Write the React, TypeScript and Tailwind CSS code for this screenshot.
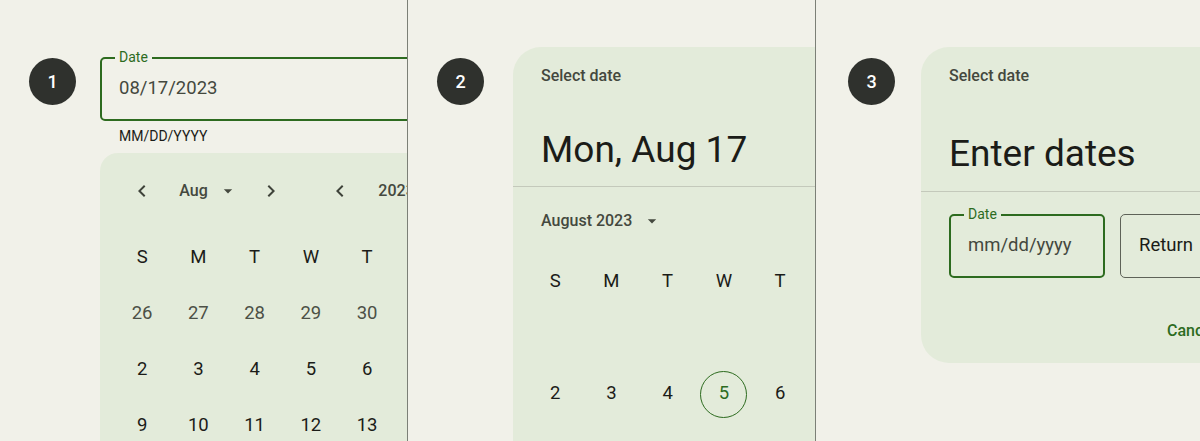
import React from 'react';

const green = 'text-[#2d6b1f]';

function Badge({ n }: { n: number }) {
  return (
    <div className="w-[47px] h-[47px] shrink-0 rounded-full bg-[#2f312d] text-white text-[18px] font-medium flex items-center justify-center">
      {n}
    </div>
  );
}

function ChevronLeft() {
  return (
    <svg width="24" height="24" viewBox="0 0 24 24" fill="#3f433a">
      <path d="M15.41 7.41L14 6l-6 6 6 6 1.41-1.41L10.83 12z" />
    </svg>
  );
}

function ChevronRight() {
  return (
    <svg width="24" height="24" viewBox="0 0 24 24" fill="#3f433a">
      <path d="M8.59 16.59L10 18l6-6-6-6-1.41 1.41L13.17 12z" />
    </svg>
  );
}

function DropTriangle() {
  return (
    <svg width="20" height="20" viewBox="0 0 24 24" fill="#44483e">
      <path d="M7 10l5 5 5-5z" />
    </svg>
  );
}

const weekdays = ['S', 'M', 'T', 'W', 'T', 'F', 'S'];

function DayGrid({ rows, today }: { rows: (number | null)[][]; today?: number }) {
  return (
    <div className="grid grid-cols-[repeat(7,56.25px)]">
      {weekdays.map((d, i) => (
        <div key={'w' + i} className="h-[56px] flex items-center justify-center text-[18.5px] text-[#1b1c18]">
          {d}
        </div>
      ))}
      {rows.map((row, r) =>
        row.map((d, i) => (
          <div key={r + '-' + i} className="h-[56px] flex items-center justify-center">
            {d !== null && (
              <div
                className={
                  'w-[47px] h-[47px] rounded-full flex items-center justify-center text-[18.5px] ' +
                  (d === today ? 'border border-[#2d6b1f] text-[#2d6b1f]' : r === 0 && d > 20 ? 'text-[#4c5046]' : 'text-[#1b1c18]')
                }
              >
                {d}
              </div>
            )}
          </div>
        ))
      )}
    </div>
  );
}

function OutlinedField({ label, value, width, bg }: { label: string; value: string; width: string; bg: string }) {
  return (
    <div className={'relative shrink-0 h-[64px] rounded-[5px] border-2 border-[#2d6b1f] flex items-center pl-[17px] ' + width}>
      <span className={'absolute top-[-10px] left-[13px] px-[4px] text-[14px] leading-[16px] ' + green + ' ' + bg}>{label}</span>
      <span className="text-[18.5px] text-[#44483e]">{value}</span>
    </div>
  );
}

export default function App() {
  return (
    <div className="w-[1200px] h-[441px] overflow-hidden flex bg-[#f1f1e9] font-[Roboto,sans-serif]">
      {/* 1: docked picker */}
      <div className="w-[408px] shrink-0 overflow-hidden border-r border-[#7c8077] flex items-start gap-[24px] pl-[29px] pt-[57px]">
        <div className="mt-[1px]">
          <Badge n={1} />
        </div>
        <div className="w-[420px] shrink-0">
          <OutlinedField label="Date" value="08/17/2023" width="w-[420px]" bg="bg-[#f1f1e9]" />
          <div className="mt-[7px] pl-[19px] text-[14px] leading-[16px] text-[#1b1c18]">MM/DD/YYYY</div>
          <div className="mt-[9px] w-[420px] rounded-t-[18px] bg-[#e3ebda] px-[14px]">
            <div className="h-[75px] flex items-center text-[16px] font-medium text-[#44483e]">
              <div className="w-[56px] flex justify-center"><ChevronLeft /></div>
              <span className="ml-[10px]">Aug</span>
              <div className="ml-[10px]"><DropTriangle /></div>
              <div className="ml-[6px] w-[56px] flex justify-center"><ChevronRight /></div>
              <div className="ml-[13px] w-[56px] flex justify-center"><ChevronLeft /></div>
              <span className="ml-[11px]">2023</span>
              <div className="ml-[10px]"><DropTriangle /></div>
              <div className="ml-[6px] w-[56px] flex justify-center"><ChevronRight /></div>
            </div>
            <div className="pt-[2px]">
              <DayGrid
                rows={[
                  [26, 27, 28, 29, 30, 31, 1],
                  [2, 3, 4, 5, 6, 7, 8],
                  [9, 10, 11, 12, 13, 14, 15],
                ]}
              />
            </div>
          </div>
        </div>
      </div>

      {/* 2: modal picker */}
      <div className="w-[408px] shrink-0 overflow-hidden border-r border-[#7c8077] flex items-start gap-[29px] pl-[29px] pt-[47px]">
        <div className="mt-[11px]">
          <Badge n={2} />
        </div>
        <div className="w-[420px] shrink-0 rounded-t-[28px] bg-[#e3ebda]">
          <div className="h-[139px] pl-[28px] pt-[18px]">
            <div className="text-[16px] leading-[22px] font-medium text-[#44483e]">Select date</div>
            <div className="mt-[41px] text-[37px] leading-[44px] text-[#1b1c18]">Mon, Aug 17</div>
          </div>
          <div className="h-px bg-[#c4c9bb]" />
          <div className="h-[67px] flex items-center pl-[28px] text-[16px] font-medium text-[#44483e]">
            <span>August 2023</span>
            <div className="ml-[10px]"><DropTriangle /></div>
          </div>
          <div className="px-[14px]">
            <DayGrid
              today={5}
              rows={[
                [null, null, null, null, null, null, 1],
                [2, 3, 4, 5, 6, 7, 8],
                [9, 10, 11, 12, 13, 14, 15],
              ]}
            />
          </div>
        </div>
      </div>

      {/* 3: input mode */}
      <div className="flex-1 overflow-hidden flex items-start gap-[26px] pl-[32px] pt-[47px]">
        <div className="mt-[11px]">
          <Badge n={3} />
        </div>
        <div className="w-[383px] shrink-0 rounded-[28px] bg-[#e3ebda] pb-[9px]">
          <div className="h-[144px] pl-[28px] pt-[18px]">
            <div className="text-[16px] leading-[22px] font-medium text-[#44483e]">Select date</div>
            <div className="mt-[45px] text-[37px] leading-[44px] text-[#1b1c18]">Enter dates</div>
          </div>
          <div className="h-px bg-[#c4c9bb]" />
          <div className="px-[28px] pt-[22px] flex gap-[15px]">
            <OutlinedField label="Date" value="mm/dd/yyyy" width="w-[156px]" bg="bg-[#e3ebda]" />
            <div className="w-[156px] shrink-0 h-[64px] rounded-[5px] border border-[#5e6258] flex items-center pl-[18px] text-[18.5px] text-[#1b1c18]">
              Return
            </div>
          </div>
          <div className="mt-[30px] h-[46px] flex justify-end gap-[9px] pr-[9px] text-[16px] font-medium text-[#2d6b1f]">
            <button className="px-[14px] h-full rounded-full">Cancel</button>
            <button className="min-w-[56px] px-[14px] h-full rounded-full">OK</button>
          </div>
        </div>
      </div>
    </div>
  );
}
